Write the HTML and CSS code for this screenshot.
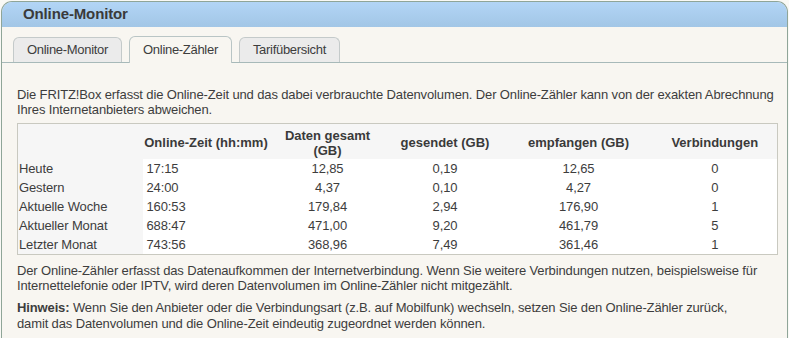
FILE: index.html
```html
<!DOCTYPE html>
<html lang="de">
<head>
  <meta charset="UTF-8">
  <title>Online-Monitor</title>
  <link rel="stylesheet" href="styles.css">
</head>
<body>
  <div class="box">
    <div class="box-head">Online-Monitor</div>
    <div class="tabs">
      <span class="tab">Online-Monitor</span>
      <span class="tab active">Online-Zähler</span>
      <span class="tab">Tarifübersicht</span>
    </div>
    <div class="content">
      <p class="intro">Die FRITZ!Box erfasst die Online-Zeit und das dabei verbrauchte Datenvolumen. Der Online-Zähler kann von der exakten Abrechnung Ihres Internetanbieters abweichen.</p>
      <table class="counter">
        <colgroup>
          <col class="c0"><col class="c1"><col class="c2"><col class="c3"><col class="c4"><col class="c5">
        </colgroup>
        <thead>
          <tr>
            <th></th>
            <th>Online-Zeit (hh:mm)</th>
            <th>Daten gesamt<br>(GB)</th>
            <th>gesendet (GB)</th>
            <th>empfangen (GB)</th>
            <th>Verbindungen</th>
          </tr>
        </thead>
        <tbody>
          <tr><td>Heute</td><td class="time">17:15</td><td>12,85</td><td>0,19</td><td>12,65</td><td>0</td></tr>
          <tr><td>Gestern</td><td class="time">24:00</td><td>4,37</td><td>0,10</td><td>4,27</td><td>0</td></tr>
          <tr><td>Aktuelle Woche</td><td class="time">160:53</td><td>179,84</td><td>2,94</td><td>176,90</td><td>1</td></tr>
          <tr><td>Aktueller Monat</td><td class="time">688:47</td><td>471,00</td><td>9,20</td><td>461,79</td><td>5</td></tr>
          <tr><td>Letzter Monat</td><td class="time">743:56</td><td>368,96</td><td>7,49</td><td>361,46</td><td>1</td></tr>
        </tbody>
      </table>
      <p class="note">Der Online-Zähler erfasst das Datenaufkommen der Internetverbindung. Wenn Sie weitere Verbindungen nutzen, beispielsweise für Internettelefonie oder IPTV, wird deren Datenvolumen im Online-Zähler nicht mitgezählt.</p>
      <p class="note hint"><b>Hinweis:</b> Wenn Sie den Anbieter oder die Verbindungsart (z.B. auf Mobilfunk) wechseln, setzen Sie den Online-Zähler zurück, damit das Datenvolumen und die Online-Zeit eindeutig zugeordnet werden können.</p>
    </div>
  </div>
</body>
</html>
```

FILE: styles.css
```css
body { margin: 0; background: #f9f9f5; font-family: "Liberation Sans", Arial, sans-serif; font-size: 13px; letter-spacing: -0.13px; color: #3d3d3d; }
.box { margin: 1px 1px 0 1px; border: 1px solid #8fa598; border-bottom: none; border-radius: 11px 11px 0 0; background: #f8f6f1; height: 337px; overflow: hidden; }
.box-head { height: 25px; line-height: 24px; padding-left: 21px; font-size: 15px; font-weight: bold; color: #3a3a3a; background: linear-gradient(#b2d5f6, #a2c6e6); }
.tabs { display: flex; align-items: flex-end; gap: 7px; padding: 10px 0 0 11px; height: 25px; border-bottom: 1px solid #a7b9b9; }
.tab { height: 24px; line-height: 24px; padding: 0 13px; background: #ebebeb; border: 1px solid #c4caca; border-bottom: none; border-radius: 6px 6px 0 0; letter-spacing: -0.3px; color: #3d3d3d; }
.tab.active { height: 26px; line-height: 26px; margin-bottom: -1px; background: #f8f6f1; border-color: #b9c5c5; }
.content { padding: 0 10px 0 15px; }
p { margin: 0; line-height: 15px; }
.intro { padding-top: 24px; }
.counter { width: 761px; margin-top: 6px; border-collapse: collapse; border: 1px solid #c9c9c0; background: #f6f6f6; table-layout: fixed; }
.counter .c0 { width: 125px; }
.counter .c1 { width: 127px; }
.counter .c2 { width: 116px; }
.counter .c3 { width: 119px; }
.counter .c4 { width: 148px; }
.counter th { font-weight: bold; font-size: 13px; letter-spacing: 0; line-height: 15px; height: 33px; padding: 2px 0 0; text-align: center; color: #3a3a3a; vertical-align: middle; }
.counter td { height: 19px; padding: 0; line-height: 19px; text-align: center; background: #fff; }
.counter td:first-child { text-align: left; padding-left: 1px; background: #f6f6f6; }
.counter td.time { text-align: left; padding-left: 4px; }
.note { margin-top: 8px; }
.hint { margin-top: 7px; line-height: 16px; max-width: 740px; }
```
